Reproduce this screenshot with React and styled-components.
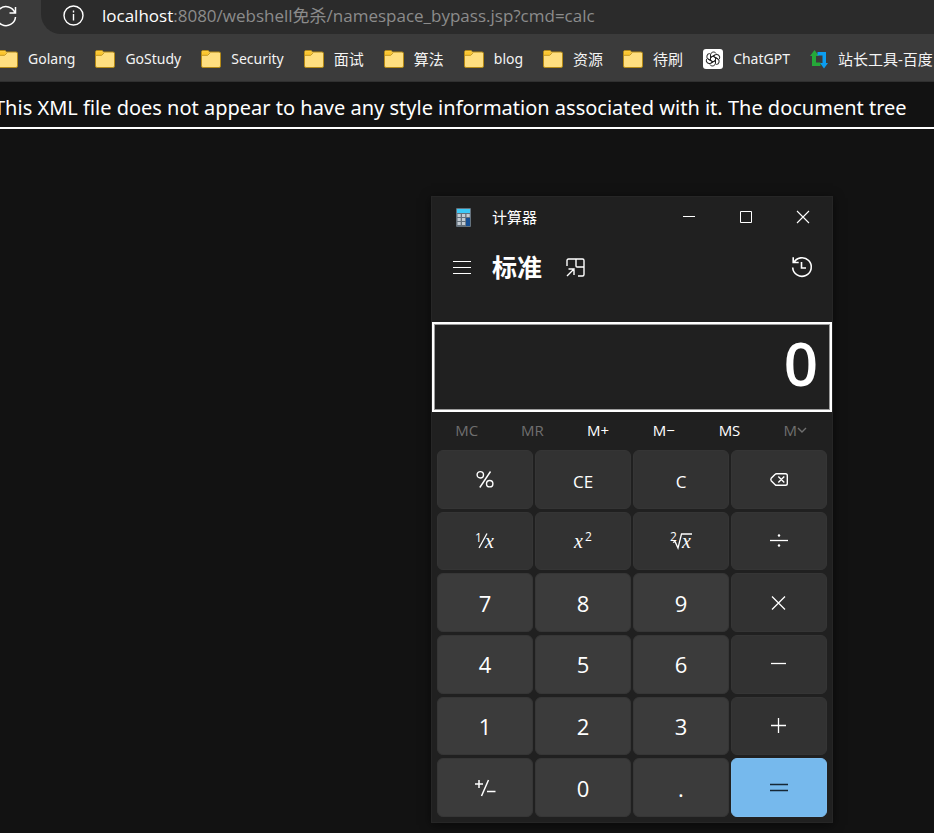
import React from "react";
import styled, { createGlobalStyle } from "styled-components";

const ui = `"Open Sans", "Noto Sans CJK SC", sans-serif`;
const compact = `"Noto Sans", "Noto Sans CJK SC", sans-serif`;

const GlobalStyle = createGlobalStyle`
  *, *::before, *::after { box-sizing: border-box; }
  body { margin: 0; background: #121212; color: #fff; font-family: ${ui}; overflow: hidden; }
  button { font: inherit; color: inherit; border: 0; padding: 0; background: none; }
  svg { display: block; flex: none; overflow: visible; }
`;

const Browser = styled.div`
  display: flex;
  flex-direction: column;
  min-height: 100vh;
  overflow: hidden;
`;

const Toolbar = styled.header`
  display: flex;
  height: 34px;
  background: #3b3b3b;
`;

const ReloadButton = styled.button`
  width: 41px;
  margin-left: -6px;
  padding-bottom: 2px;
  margin-right: 6px;
  flex: none;
`;

const AddressBar = styled.div`
  flex: 1;
  min-width: 0;
  display: flex;
  align-items: center;
  gap: 18px;
  padding: 0 0 3px 22px;
  background: #2b2b2b;
  border-radius: 0 0 0 20px;
`;

const Address = styled.span`
  font-size: 17px;
  line-height: 24px;
  white-space: nowrap;
  color: #8c8c8c;
  b { font-weight: 400; color: #fff; }
`;

const Bookmarks = styled.nav`
  background: #3b3b3b;
  border-bottom: 1px solid #303030;
  display: flex;
  align-items: center;
  gap: 20px;
  height: 48px;
  margin-left: -3px;
  padding: 4px 0 1px 1px;
`;

const Bookmark = styled.a`
  display: flex;
  align-items: center;
  gap: 10px;
  flex: none;
  color: #f4f4f4;
  text-decoration: none;
  white-space: nowrap;
  font-family: ${compact};
  font-size: ${(p) => (p.$cjk ? 15 : 14)}px;
  line-height: 20px;
`;

const Notice = styled.p`
  margin: 0 0 0 -6px;
  height: 47px;
  padding-top: 11px;
  border-bottom: 2px solid #fff;
  font-family: ${compact};
  font-size: 20px;
  line-height: 30px;
  white-space: nowrap;
`;

const Desktop = styled.main`
  display: flex;
  justify-content: flex-end;
  padding: 67px 101px 10px 0;
`;

const Calculator = styled.section`
  width: 402px;
  background: #202020;
  border: 1px solid #262626;
  box-shadow: 0 2px 10px #0008;
`;

const TitleBar = styled.div`
  display: flex;
  align-items: center;
  height: 40px;
  padding: 0 1px 0 24px;
`;

const AppName = styled.span`
  flex: 1;
  margin-left: 21px;
  font-size: 15px;
  line-height: 20px;
`;

const WindowButton = styled.button`
  display: grid;
  place-items: center;
  width: 57px;
  height: 38px;
`;

const ModeBar = styled.div`
  display: flex;
  align-items: center;
  height: 60px;
  padding: 0 19px 0 20px;
`;

const ModeName = styled.h1`
  margin: 0 24px 0 20px;
  font-size: 25px;
  line-height: 34px;
  font-weight: 700;
`;

const IconButton = styled.button`
  display: grid;
  place-items: center;
  margin-left: ${(p) => (p.$end ? "auto" : "0")};
`;

const Display = styled.output`
  display: flex;
  align-items: center;
  justify-content: flex-end;
  height: 90px;
  margin-top: 25px;
  padding: 0 12px 8px 0;
  border: 2px solid #fff;
  box-shadow: inset 0 0 0 1px #9b9b9b;
  font-size: 60px;
  line-height: 80px;
  font-weight: 600;
`;

const MemoryRow = styled.div`
  display: grid;
  grid-template-columns: repeat(6, 1fr);
  height: 38px;
  padding: 0 4px 2px 2px;
`;

const MemoryButton = styled.button`
  display: flex;
  align-items: center;
  justify-content: center;
  font-size: 15px;
  &:disabled { color: #6f6f6f; }
`;

const Keypad = styled.div`
  display: grid;
  grid-template-columns: repeat(4, 1fr);
  grid-template-rows: repeat(6, 1fr);
  gap: 3px 2px;
  height: 367px;
  margin: 0 5px 5px;
`;

const keyStyles = {
  digit: { bg: "#3b3b3b", edge: "#363636", ink: "#fff", size: 22, drop: 0 },
  operator: { bg: "#323232", edge: "#353535", ink: "#fff", size: 17, drop: 5 },
  equals: { bg: "#76b9ed", edge: "#7cbcee", ink: "#152735", size: 17, drop: 0 },
};

const Key = styled.button`
  display: grid;
  place-items: center;
  border-radius: 6px;
  background: ${(p) => keyStyles[p.$kind].bg};
  border: 1px solid ${(p) => keyStyles[p.$kind].edge};
  color: ${(p) => keyStyles[p.$kind].ink};
  font-size: ${(p) => keyStyles[p.$kind].size}px;
  line-height: 30px;
  padding-top: ${(p) => (p.$drawn ? 0 : keyStyles[p.$kind].drop)}px;
`;

const Icon = ({ w, h, sw = 1, children }) => (
  <svg width={w} height={h} viewBox={`0 0 ${w} ${h}`} fill="none" stroke="currentColor" strokeWidth={sw} aria-hidden="true">
    {children}
  </svg>
);

const Folder = () => (
  <svg width="20" height="20" viewBox="0 0 20 20" aria-hidden="true">
    <path d="M.5 3Q.5 1.500 2 1.500h5l1.700 1.500h9.300q1.500 0 1.500 1.500v12.500q0 1.500-1.500 1.500H2Q.5 18.500.5 17Z" fill="#ffdf80" stroke="#b58a16" />
    <path d="M1.200 6V3q0-.8.8-.8h4.800l1.500 1.300L6.500 6Z" fill="#fcc62d" />
    <path d="M1 6.300h5.700L9 3.800" fill="none" stroke="#c69619" />
  </svg>
);

const ChatGpt = () => (
  <svg width="20" height="20" viewBox="0 0 20 20" aria-hidden="true">
    <rect width="20" height="20" rx="3" fill="#fff" />
    <g fill="none" stroke="#222" strokeWidth="1" strokeLinejoin="round">
      {[0, 60, 120, 180, 240, 300].map((a) => (
        <path key={a} transform={`rotate(${a} 10 10)`} d="M7.500 11.400V6.200c0-3.300 4.100-4.300 5.600-1.700M7.500 8.600l4.700-2.700" />
      ))}
    </g>
  </svg>
);

const ToolsLogo = () => (
  <svg width="18" height="20" viewBox="0 0 18 20" aria-hidden="true">
    <path d="M4.500 1 0 7h2v10h8.500v-3.500H6V7h3Z" fill="#25a939" />
    <path d="M7.500 3H16v11h2l-4 5.500L10 14h2.500V6.500h-5Z" fill="#0c9df0" />
  </svg>
);

const CalcLogo = () => (
  <svg width="15" height="19" viewBox="0 0 15 19" aria-hidden="true">
    <rect width="15" height="19" rx="1" fill="#64717c" />
    <rect x="1" y="1" width="13" height="4" fill="#3cc9f7" />
    {[6, 10, 14].map((y) => [1.5, 6, 10.5].map((x) => (
      <rect key={`${x}-${y}`} x={x} y={y} width="3.200" height="3" fill="#c3ccd4" />
    )))}
    <rect x="10" y="10" width="4" height="8" fill="#164f94" />
  </svg>
);

const Glyph = ({ children, ...rest }) => (
  <text fill="currentColor" stroke="none" {...rest}>{children}</text>
);
const italic = { fontFamily: "Liberation Serif, serif", fontStyle: "italic", fontSize: 20 };
const small = { fontFamily: "Open Sans, sans-serif", fontSize: 12 };

const icons = {
  percent: (
    <Icon w={18} h={18} sw={1.4}>
      <circle cx="4.300" cy="4.800" r="3.200" /><circle cx="13.700" cy="13.700" r="3.200" /><path d="M14.500 1.500 3.800 17.500" />
    </Icon>
  ),
  backspace: (
    <Icon w={18} h={14} sw={1.4}>
      <path d="M6.500 1.700h9q1.800 0 1.800 1.800v8q0 1.800-1.800 1.800h-9q-.8 0-1.300-.6L1.200 8.700q-.8-1.200 0-2.400L5.200 2.300Q5.700 1.700 6.500 1.700ZM8.300 4.500l6 6M14.300 4.500l-6 6" />
    </Icon>
  ),
  inverse: (
    <Icon w={20} h={22} sw={1.3}>
      <Glyph x="0" y="12" {...small}>1</Glyph><path d="M12 3.500 4 18" /><Glyph x="10" y="18" {...italic}>x</Glyph>
    </Icon>
  ),
  square: (
    <Icon w={20} h={22}>
      <Glyph x="1" y="18" {...italic}>x</Glyph><Glyph x="12" y="11" {...small}>2</Glyph>
    </Icon>
  ),
  root: (
    <Icon w={24} h={22} sw={1.3}>
      <Glyph x="1" y="11" {...small}>2</Glyph><path d="m4 12.500 2-1 3 6.500 3.500-14H23" /><Glyph x="13" y="18" {...italic}>x</Glyph>
    </Icon>
  ),
  divide: (
    <Icon w={18} h={16} sw={1.3}>
      <path d="M0 7.500h18" /><circle cx="9" cy="2.500" r="1.200" fill="currentColor" stroke="none" /><circle cx="9" cy="12.500" r="1.200" fill="currentColor" stroke="none" />
    </Icon>
  ),
  multiply: <Icon w={16} h={14} sw={1.3}><path d="m1 .5 13 13M14 .5l-13 13" /></Icon>,
  minus: <Icon w={16} h={16} sw={1.3}><path d="M0 7.500h15" /></Icon>,
  plus: <Icon w={16} h={16} sw={1.3}><path d="M0 7.500h15M7.500 0v15" /></Icon>,
  negate: (
    <Icon w={22} h={18} sw={1.5}>
      <path d="M1 5h8M5 1v8M14.500 1 7.500 17M13 12.500h8.500" />
    </Icon>
  ),
  equals: <Icon w={18} h={10} sw={1.4}><path d="M0 1.500h18M0 7.500h18" /></Icon>,
};

const keys = [
  ["百分比", icons.percent], ["CE"], ["C"], ["退格", icons.backspace],
  ["倒数", icons.inverse], ["平方", icons.square], ["平方根", icons.root], ["除以", icons.divide],
  ["7"], ["8"], ["9"], ["乘以", icons.multiply],
  ["4"], ["5"], ["6"], ["减", icons.minus],
  ["1"], ["2"], ["3"], ["加", icons.plus],
  ["正负", icons.negate], ["0"], ["."], ["等于", icons.equals],
];

const kindOf = (i) => (i === 23 ? "equals" : i >= 8 && i % 4 !== 3 ? "digit" : "operator");

const bookmarks = [
  ["Golang"], ["GoStudy"], ["Security"], ["面试", true], ["算法", true], ["blog"],
  ["资源", true], ["待刷", true], ["ChatGPT", false, <ChatGpt />], ["站长工具-百度", true, <ToolsLogo />],
];

export default function App() {
  return (
    <Browser>
      <GlobalStyle />
      <Toolbar>
        <ReloadButton aria-label="刷新">
          <Icon w={24} h={24} sw={1.5}>
            <path d="M21 9A9.500 9.500 0 1 0 21.500 13M21.500 3v6h-6" />
          </Icon>
        </ReloadButton>
        <AddressBar>
          <Icon w={21} h={21} sw={1.4}>
            <circle cx="10.500" cy="10.500" r="9.500" /><path d="M10.500 9v6.500M10.500 5.500v2" />
          </Icon>
          <Address><b>localhost</b>:8080/webshell免杀/namespace_bypass.jsp?cmd=calc</Address>
        </AddressBar>
      </Toolbar>
      <Bookmarks>
        {bookmarks.map(([name, cjk, icon]) => (
          <Bookmark key={name} href="#" $cjk={cjk}>{icon || <Folder />}{name}</Bookmark>
        ))}
      </Bookmarks>
      <Notice>This XML file does not appear to have any style information associated with it. The document tree</Notice>
      <Desktop>
        <Calculator>
          <TitleBar>
            <CalcLogo />
            <AppName>计算器</AppName>
            <WindowButton aria-label="最小化"><Icon w={12} h={12}><path d="M0 5.500h12" /></Icon></WindowButton>
            <WindowButton aria-label="最大化"><Icon w={12} h={12}><path d="M.5.5h11v11H.5Z" /></Icon></WindowButton>
            <WindowButton aria-label="关闭"><Icon w={12} h={12} sw={1.1}><path d="m0 0 12 12M12 0 0 12" /></Icon></WindowButton>
          </TitleBar>
          <ModeBar>
            <IconButton aria-label="菜单"><Icon w={20} h={16} sw={1.2}><path d="M1 2.500h18M1 8.500h18M1 14.500h18" /></Icon></IconButton>
            <ModeName>标准</ModeName>
            <IconButton aria-label="置顶">
              <Icon w={19} h={19} sw={1.4}>
                <path d="M1 8V2.500Q1 1 2.500 1h14Q18 1 18 2.500v14q0 1.500-1.500 1.500H12M10 1v7q0 1 1 1h7M1 18l7.500-7.500M2.500 11H8v6" />
              </Icon>
            </IconButton>
            <IconButton aria-label="历史记录" $end>
              <Icon w={22} h={22} sw={1.6}>
                <path d="M2.600 7A9.300 9.300 0 1 1 1.700 11.500M2.200 1.200V6.500h5.500M10.500 6v6H15" />
              </Icon>
            </IconButton>
          </ModeBar>
          <Display>0</Display>
          <MemoryRow>
            <MemoryButton disabled>MC</MemoryButton>
            <MemoryButton disabled>MR</MemoryButton>
            <MemoryButton>M+</MemoryButton>
            <MemoryButton>M−</MemoryButton>
            <MemoryButton>MS</MemoryButton>
            <MemoryButton disabled>M<Icon w={10} h={8} sw={1.4}><path d="m1 2 4 4 4-4" /></Icon></MemoryButton>
          </MemoryRow>
          <Keypad>
            {keys.map(([name, icon], i) => (
              <Key key={name} $kind={kindOf(i)} $drawn={!!icon} aria-label={name}>{icon || name}</Key>
            ))}
          </Keypad>
        </Calculator>
      </Desktop>
    </Browser>
  );
}
